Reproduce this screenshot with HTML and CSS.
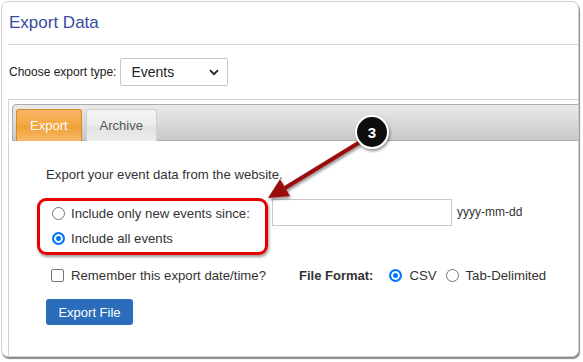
FILE: index.html
```html
<!DOCTYPE html>
<html lang="en">
<head>
    <meta charset="UTF-8">
    <title>Export Data</title>
    <link rel="stylesheet" href="styles.css">
</head>
<body>
    <div class="window">
        <h1 class="page-title">Export Data</h1>

        <div class="type-row">
            <label for="export-type">Choose export type:</label>
            <div class="select-box">
                <span>Events</span>
                <svg class="chevron" width="10" height="7" viewBox="0 0 10 7"><path d="M1 1.2 5 5.2 9 1.2" fill="none" stroke="#222" stroke-width="1.8"/></svg>
            </div>
        </div>

        <div class="panel">
            <div class="tab-bar">
                <div class="tab active">Export</div>
                <div class="tab">Archive</div>
            </div>

            <div class="panel-body">
                <p class="intro">Export your event data from the website.</p>

                <div class="since-row">
                    <div class="choices">
                        <label class="choice"><span class="radio"></span>Include only new events since:</label>
                        <label class="choice"><span class="radio checked"></span>Include all events</label>
                    </div>
                    <div class="date-input"></div>
                    <span class="hint">yyyy-mm-dd</span>
                </div>

                <div class="options-row">
                    <label class="remember"><span class="checkbox"></span>Remember this export date/time?</label>
                    <div class="format">
                        <strong>File Format:</strong>
                        <label class="choice"><span class="radio checked"></span>CSV</label>
                        <label class="choice"><span class="radio"></span>Tab-Delimited</label>
                    </div>
                </div>

                <button class="export-button">Export File</button>
            </div>
        </div>
    </div>

    <!-- callout drawn over the screenshot -->
    <svg class="callout" width="583" height="362" viewBox="0 0 583 362">
        <defs>
            <filter id="shadow" x="-50%" y="-50%" width="200%" height="200%">
                <feDropShadow dx="1" dy="2" stdDeviation="1.5" flood-color="#000" flood-opacity="0.45"/>
            </filter>
        </defs>
        <g filter="url(#shadow)">
            <line x1="360" y1="142" x2="285" y2="188" stroke="#9a0f0f" stroke-width="4"/>
            <polygon points="268,198 290,196 280,179" fill="#9a0f0f"/>
        </g>
        <circle cx="372" cy="132" r="16" fill="#111" stroke="#fff" stroke-width="2" filter="url(#shadow)"/>
        <text x="372" y="137.5" text-anchor="middle" class="step">3</text>
    </svg>
</body>
</html>
```

FILE: styles.css
```css
* {
    margin: 0;
    padding: 0;
    box-sizing: border-box;
}

body {
    font-family: "Liberation Sans", Arial, sans-serif;
    background: #fff;
    color: #222;
    width: 583px;
    height: 362px;
    position: relative;
    overflow: hidden;
}

.window {
    margin: 1px 4px 0 1px;
    height: 356px;
    border: 1px solid #cfcfcf;
    border-radius: 7px;
    box-shadow: 1px 2px 1px rgba(0, 0, 0, 0.45);
    overflow: hidden;
    background: #fff;
    padding-left: 6px;
}

.page-title {
    font-size: 17px;
    font-weight: normal;
    line-height: 20px;
    color: #3a4aa0;
    padding: 11px 0 11px 1px;
    border-bottom: 1px solid #d6d6d6;
}

.type-row {
    display: flex;
    align-items: center;
    margin-top: 13px;
    font-size: 12px;
    padding-left: 1px;
}

.select-box {
    display: flex;
    align-items: center;
    justify-content: space-between;
    width: 108px;
    height: 28px;
    margin-left: 4px;
    padding: 0 8px 0 10px;
    border: 1px solid #c8c8c8;
    border-radius: 2px;
    font-size: 14px;
    color: #222;
}

.panel {
    margin-top: 13px;
    width: 620px;
    height: 300px;
    border: 1px solid #d4d4d4;
    padding: 4px 0 0 3px;
}

.tab-bar {
    display: flex;
    gap: 4px;
    height: 37px;
    padding: 4px 0 0 3px;
    border: 1px solid #ababab;
    border-radius: 4px 4px 0 0;
    background: linear-gradient(#e9e9e9, #d9d9d9 50%, #c9c9c9);
}

.tab {
    height: 32px;
    padding: 0 13px;
    font-size: 13px;
    line-height: 31px;
    color: #555;
    border: 1px solid #d0d0d0;
    border-bottom: none;
    border-radius: 3px 3px 0 0;
    background: linear-gradient(#f4f4f4, #ececec 50%, #e2e2e2 51%, #ececec);
}

.tab.active {
    color: #fff;
    border-color: #d48a2c;
    background: linear-gradient(#f7b563, #f4a643 50%, #f39f33 51%, #f6b96b);
}

.panel-body {
    padding: 24px 0 0 34px;
    font-size: 13.2px;
    color: #333;
}

.intro {
    line-height: 20px;
}

.since-row {
    display: flex;
    align-items: flex-start;
    margin-top: 13px;
}

.choices {
    width: 231px;
    margin-left: -9px;
    padding: 0 0 1px 12px;
    border: 3px solid #e60000;
    border-radius: 9px;
    box-shadow: 1px 2px 3px rgba(0, 0, 0, 0.4);
}

.choice {
    display: flex;
    align-items: center;
    height: 25px;
}

.radio {
    width: 13px;
    height: 13px;
    margin-right: 6px;
    border: 1px solid #767676;
    border-radius: 50%;
    background: #fff;
}

.radio.checked {
    border: 2px solid #0075ff;
    box-shadow: inset 0 0 0 2px #fff;
    background: #0075ff;
}

.date-input {
    width: 180px;
    height: 27px;
    margin: 1px 0 0 4px;
    border: 1px solid #c8c8c8;
}

.hint {
    margin: 7px 0 0 5px;
    font-size: 12px;
}

.options-row {
    display: flex;
    align-items: center;
    height: 20px;
    margin-top: 10px;
}

.remember {
    display: flex;
    align-items: center;
    width: 253px;
}

.checkbox {
    width: 13px;
    height: 13px;
    margin: 0 7px 0 5px;
    border: 1px solid #767676;
    border-radius: 2px;
}

.format {
    display: flex;
    align-items: center;
}

.format strong {
    font-size: 13px;
    margin-right: 16px;
}

.format .choice {
    margin-right: 9px;
}

.format .radio {
    margin-right: 7px;
}

.export-button {
    display: block;
    margin-top: 14px;
    width: 87px;
    height: 26px;
    border: none;
    border-radius: 3px;
    background: #2c6dbb;
    color: #fff;
    font-family: inherit;
    font-size: 13px;
}

.callout {
    position: absolute;
    left: 0;
    top: 0;
    pointer-events: none;
}

.step {
    fill: #fff;
    font-family: "Liberation Sans", Arial, sans-serif;
    font-weight: bold;
    font-size: 15px;
}
```
